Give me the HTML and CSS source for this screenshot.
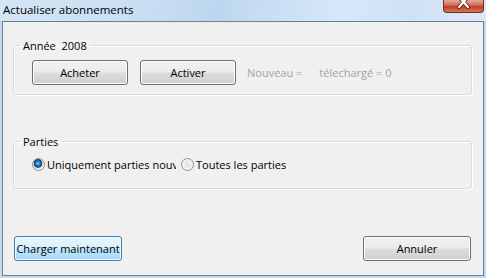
FILE: index.html
```html
<!DOCTYPE html>
<html lang="fr">
<head>
  <title>Actualiser abonnements</title>
  <link rel="stylesheet" href="styles.css">
</head>
<body>
  <div class="window">
    <div class="titlebar">
      <span class="title">Actualiser abonnements</span>
      <button class="close-btn" type="button" aria-label="Fermer">
        <svg width="41" height="13" viewBox="0 0 41 13">
          <path d="M16 -3 L25 7 M25 -3 L16 7" stroke="#5a2418" stroke-width="4" stroke-linecap="round"/>
          <path d="M16 -3 L25 7 M25 -3 L16 7" stroke="#ffffff" stroke-width="2.2" stroke-linecap="round"/>
        </svg>
      </button>
    </div>

    <div class="client">
      <fieldset class="group group-year">
        <legend>Ann&eacute;e&nbsp; 2008</legend>
        <div class="row">
          <button class="btn" type="button">Acheter</button>
          <button class="btn" type="button">Activer</button>
          <span class="info info-new">Nouveau =</span>
          <span class="info">t&eacute;lecharg&eacute; = 0</span>
        </div>
      </fieldset>

      <fieldset class="group group-parts">
        <legend>Parties</legend>
        <div class="row">
          <label class="radio radio-first">
            <input type="radio" name="parts" checked>
            <span class="radio-text">Uniquement parties nouvelles</span>
          </label>
          <label class="radio">
            <input type="radio" name="parts">
            <span class="radio-text">Toutes les parties</span>
          </label>
        </div>
      </fieldset>

      <div class="footer">
        <button class="btn btn-default" type="button">Charger maintenant</button>
        <button class="btn" type="button">Annuler</button>
      </div>
    </div>
  </div>
</body>
</html>
```

FILE: styles.css
```css
html, body {
    margin: 0;
    padding: 0;
}

body {
    width: 486px;
    height: 278px;
    overflow: hidden;
    background: #c3d9ef;
    font-family: "Open Sans", "Noto Sans", sans-serif;
    font-size: 11px;
    color: #000;
}

.window {
    display: flex;
    flex-direction: column;
    height: 278px;
}

.titlebar {
    height: 21px;
    display: flex;
    justify-content: space-between;
    align-items: flex-start;
    background: linear-gradient(100deg, #d4e5f6 0%, #c9def3 30%, #bcd6ef 45%, #c5dcf2 52%, #d6e7f8 70%, #cfe2f5 85%, #dceafa 100%);
}

.title {
    padding-left: 3px;
    line-height: 19px;
    font-size: 11.5px;
}

.close-btn {
    width: 41px;
    height: 13px;
    margin-right: 2px;
    padding: 0;
    border: 1px solid #6e3226;
    border-top: none;
    border-radius: 0 0 4px 4px;
    background: linear-gradient(#e8a89b, #d06a52 45%, #c04024 55%, #d8735a);
    overflow: hidden;
    display: block;
}

.close-btn svg {
    display: block;
    margin: 0 -1px;
}

.client {
    height: 253px;
    margin: 0 2px;
    border: 1px solid #6d7e92;
    background: #f0f0f0;
    display: flex;
    flex-direction: column;
}

.group {
    margin: 16px 11px 0 10px;
    padding: 0;
    border: 1px solid #d5dbe0;
    border-radius: 3px;
    box-shadow: 1px 1px 0 #ffffff, inset 1px 1px 0 #ffffff;
    min-width: 0;
}

.group legend {
    margin-left: 6px;
    padding: 0 3px;
    line-height: 15px;
}

.group-year .row {
    padding: 7px 0 9px 18px;
}

.group-parts {
    margin-top: 39px;
}

.group-parts .row {
    padding: 8px 0 16px 18px;
}

.row {
    display: flex;
    align-items: center;
}

.btn {
    width: 96px;
    height: 25px;
    padding: 0;
    border: 1px solid #707070;
    border-radius: 3px;
    background: linear-gradient(#f2f2f2 0%, #ebebeb 48%, #dddddd 52%, #cfcfcf 100%);
    box-shadow: inset 0 0 0 1px #fcfcfc;
    font-family: inherit;
    font-size: 11px;
    color: #000;
    white-space: nowrap;
    overflow: visible;
}

.row .btn + .btn {
    margin-left: 12px;
}

.info {
    color: #a3a3a3;
}

.info-new {
    margin-left: 11px;
    margin-right: 17px;
}

.radio {
    display: flex;
    align-items: center;
    white-space: nowrap;
}

.radio-first {
    width: 144px;
    overflow: hidden;
    margin-right: 5px;
}

.radio input {
    appearance: none;
    -webkit-appearance: none;
    flex: none;
    width: 13px;
    height: 13px;
    margin: 0 2px 0 0;
    border: 1px solid #8e8f8f;
    border-radius: 50%;
    background: radial-gradient(circle at 50% 50%, #e4e4e4 0, #f2f2f2 5px, #fafafa 6px);
}

.radio input:checked {
    background: radial-gradient(circle at 45% 40%, #a9e0fb 0, #2b8fd0 1.5px, #17528c 3.5px, #0d3866 4px, #d9d9d9 4.6px, #f4f4f4 6px);
}

.footer {
    margin-top: auto;
    margin-bottom: 14px;
    padding: 0 12px 0 11px;
    display: flex;
    justify-content: space-between;
}

.footer .btn {
    width: 108px;
}

.btn-default {
    border-color: #3c7fb1;
    background: linear-gradient(#eaf6fd 0%, #d9f0fc 48%, #bee6fd 52%, #a7d9f5 100%);
    box-shadow: inset 0 0 0 1px #f4fbfe;
}
```
